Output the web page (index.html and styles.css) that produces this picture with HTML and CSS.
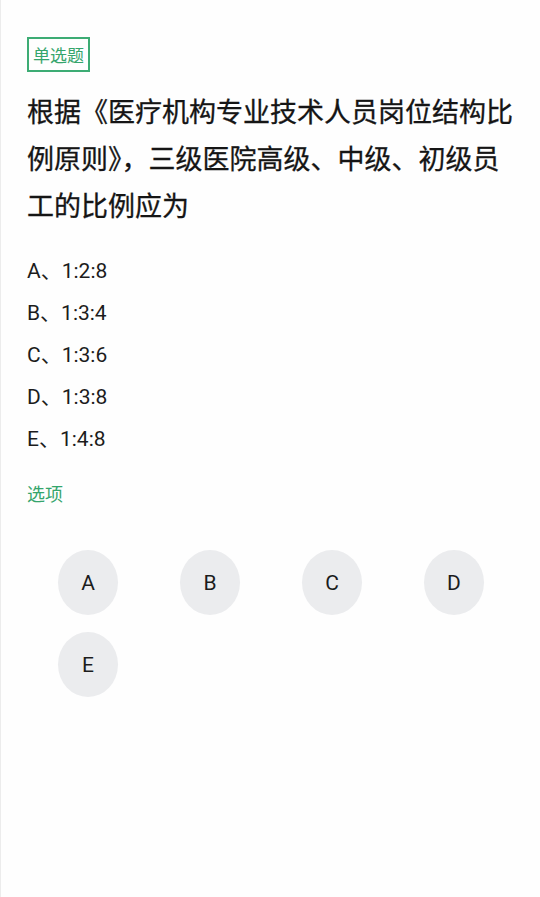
FILE: index.html
```html
<!DOCTYPE html>
<html>
<head>
    <meta charset="utf-8">
    <title>单选题</title>
    <link rel="stylesheet" href="styles.css">
</head>
<body>
    <div class="page">
        <span class="tag">单选题</span>

        <h1 class="question">根据《医疗机构专业技术人员岗位结构比例原则》，三级医院高级、中级、初级员工的比例应为</h1>

        <ul class="options">
            <li>A、1:2:8</li>
            <li>B、1:3:4</li>
            <li>C、1:3:6</li>
            <li>D、1:3:8</li>
            <li>E、1:4:8</li>
        </ul>

        <div class="section-title">选项</div>

        <div class="answer-grid">
            <button class="answer">A</button>
            <button class="answer">B</button>
            <button class="answer">C</button>
            <button class="answer">D</button>
            <button class="answer">E</button>
        </div>
    </div>
</body>
</html>
```

FILE: styles.css
```css
html, body {
    margin: 0;
    padding: 0;
    height: 100%;
}

body {
    font-family: Roboto, "Noto Sans CJK SC", sans-serif;
    background: #fefefe;
    color: #1c1c1c;
    border-left: 1px solid #ececec;
    box-sizing: border-box;
}

.page {
    padding: 37px 26px 0 26px;
}

.tag {
    display: inline-block;
    box-sizing: border-box;
    height: 35px;
    line-height: 31px;
    padding: 0 4px;
    border: 2px solid #3dac74;
    color: #35a56c;
    font-size: 17px;
    font-family: "Noto Sans CJK SC", sans-serif;
}

.question {
    margin: 15px 0 0 0;
    font-family: "Noto Sans CJK SC", sans-serif;
    font-size: 27px;
    font-weight: 400;
    line-height: 47px;
    color: #151515;
    -webkit-text-stroke: 0.3px #151515;
}

.options {
    list-style: none;
    margin: 22px 0 0 0;
    padding: 0;
}

.options li {
    font-size: 21px;
    line-height: 42px;
    color: #1c1c1c;
}

.section-title {
    margin-top: 21px;
    font-family: "Noto Sans CJK SC", sans-serif;
    font-size: 18px;
    line-height: 24px;
    color: #35a56c;
}

.answer-grid {
    margin-top: 45px;
    display: grid;
    grid-template-columns: repeat(4, 122px);
    row-gap: 17px;
    justify-items: center;
}

.answer {
    width: 60px;
    height: 65px;
    border: none;
    border-radius: 50%;
    background: #ebecee;
    color: #1c1c1c;
    font-family: Roboto, sans-serif;
    font-size: 21px;
    padding: 0;
}
```
